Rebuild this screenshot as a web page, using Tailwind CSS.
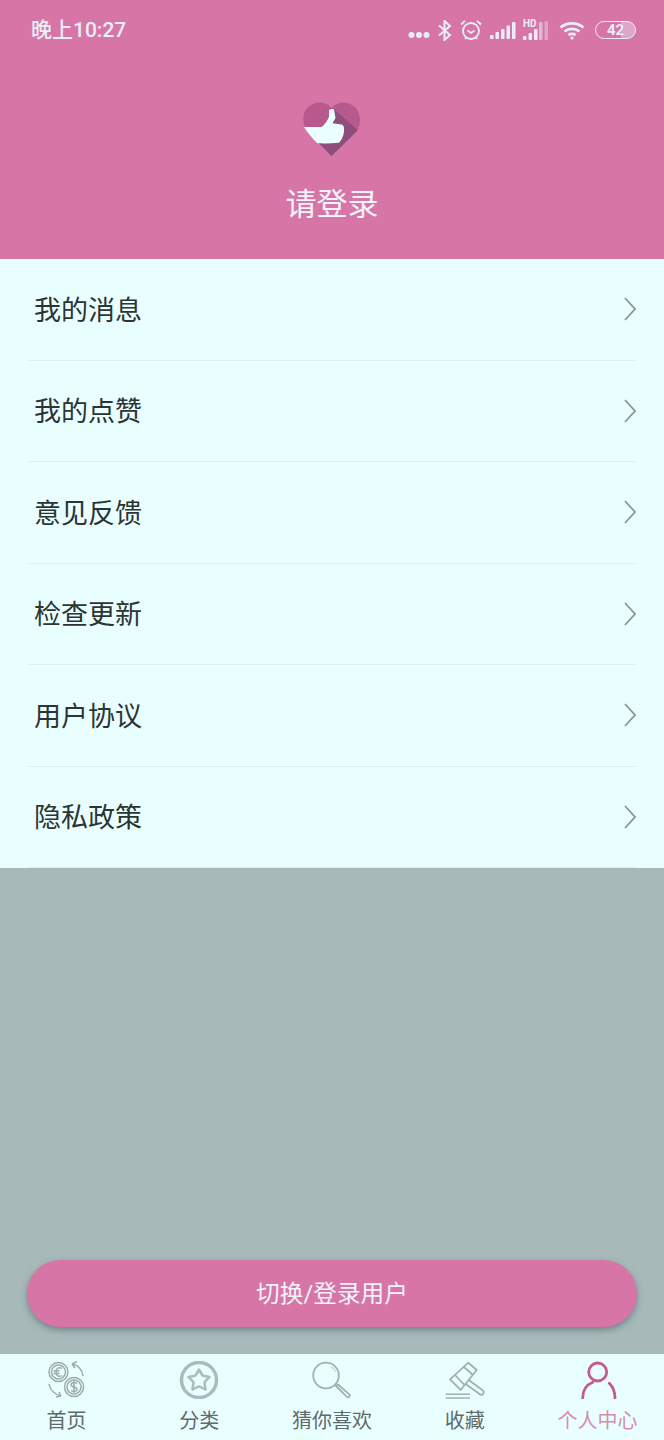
<!doctype html>
<html lang="zh">
<head>
<meta charset="utf-8">
<script src="https://cdn.jsdelivr.net/npm/@tailwindcss/browser@4"></script>
</head>
<body class="m-0 bg-[#a7b9b9] font-['Roboto','Noto_Sans_CJK_SC',sans-serif]">
<div class="w-[664px] h-[1440px] flex flex-col overflow-hidden">
  <header class="h-[259px] shrink-0 bg-[#d776a6] flex flex-col">
    <div class="h-[60px] flex items-center justify-between pl-[31px] pr-[28px] text-[#e8eef8]">
      <span class="text-[21px] font-medium leading-none">晚上10:27</span>
      <div class="flex items-center gap-[8px]">
        <svg width="22" height="8" viewBox="0 0 22 8" fill="#e8eef8" class="mt-[9px]"><circle cx="3.5" cy="4" r="3"/><circle cx="11" cy="4" r="3"/><circle cx="18.500" cy="4" r="3"/></svg>
        <svg width="14" height="21" viewBox="0 0 14 21" fill="none" stroke="#e8eef8" stroke-width="2"><path d="M1 5.500 12 15 6.500 20V1L12 6 1 15.500"/></svg>
        <svg width="22" height="22" viewBox="0 0 22 22" fill="none" stroke="#e8eef8" stroke-width="1.800"><circle cx="11" cy="12" r="8"/><path d="M7.500 11.500 11 14l3.500-2.500M1 5.500 5 1.800M21 5.500 17 1.800M5 20l1.500-2M17 20l-1.500-2"/></svg>
        <svg width="26" height="19" viewBox="0 0 26 19" fill="#e8eef8"><rect x="0" y="14" width="3.500" height="4" rx="1"/><rect x="5.500" y="11" width="3.500" height="7" rx="1"/><rect x="11" y="8" width="3.500" height="10" rx="1"/><rect x="16.500" y="4.500" width="3.500" height="13.500" rx="1"/><rect x="22" y="1" width="3.500" height="17" rx="1"/></svg>
        <div class="relative w-[26px] h-[22px] -ml-[1px]">
          <span class="absolute left-0 top-0 text-[10px] font-bold leading-[10px]">HD</span>
          <svg class="absolute left-0 top-[2px]" width="26" height="20" viewBox="0 0 26 20" fill="#e8eef8"><rect x="0" y="15" width="3.500" height="4" rx="1"/><rect x="5.500" y="12" width="3.500" height="7" rx="1"/><rect x="11" y="8" width="3.500" height="11" rx="1"/><rect x="16" y="1" width="3.500" height="18" rx="1" opacity=".55"/><rect x="21.500" y="0" width="3.500" height="19" rx="1" opacity=".4"/></svg>
        </div>
        <svg width="26" height="19" viewBox="0 0 26 19" fill="none" stroke="#e8eef8" stroke-width="2.800" class="ml-[2px]"><path d="M1.500 6.500C8 1 18 1 24.500 6.500M5.500 10.500C10 7 16 7 20.500 10.500M9.500 14C11.500 12.700 14.500 12.700 16.500 14"/><circle cx="13" cy="17" r="1.600" fill="#e8eef8" stroke="none"/></svg>
        <div class="ml-[2px] w-[41px] h-[18px] rounded-full border-[1.5px] border-[#e8eef8] flex items-center justify-center text-[15px] font-bold leading-none bg-gradient-to-r from-transparent from-[65%] to-[#e8eef8]/40 to-[65%]">42</div>
      </div>
    </div>
    <div class="flex flex-col items-center mt-[42px]">
      <svg width="58" height="55" viewBox="0 0 58 55">
        <defs><clipPath id="heart"><path d="M28.500 54 4 29C-2 21-1 8 8 3c7-4 15-3 20.500 3C34 0 42-1 49 3c9 5 10 18 5 26Z"/></clipPath></defs>
        <path d="M28.500 54 4 29C-2 21-1 8 8 3c7-4 15-3 20.500 3C34 0 42-1 49 3c9 5 10 18 5 26Z" fill="#b7598d"/>
        <path d="M31 7 60 33 28.500 60 14 40Z" fill="#8f4d7c" clip-path="url(#heart)"/>
        <path d="M1 25H18.700C22 22 25 18 26 14.700V8.500C27 7 30 6.700 31 7.500L32.500 16 29.500 21.300 38.500 22.500C40.500 23 41.500 25 41 29.700 40.500 34 38.500 38 36 40.700 29 41.500 21 41.500 14.300 41.300 9 36 4 30 1 25Z" fill="#eaffff"/>
      </svg>
      <div class="mt-[28px] text-[31px] leading-[40px] text-[#f1f2fa]">请登录</div>
    </div>
  </header>

  <main class="shrink-0 bg-[#e9ffff] h-[609px] flex flex-col pl-[28px] pr-[28px]">
    <a class="h-[101.5px] flex items-center justify-between border-b border-[#dfeeee] pl-[6px] text-[27px] text-[#2d3434]"><span class="pt-[3px]">我的消息</span><svg width="12" height="24" viewBox="0 0 12 24" fill="none" stroke="#8a9494" stroke-width="1.800"><path d="M1 1 11 12 1 23"/></svg></a>
    <a class="h-[101.5px] flex items-center justify-between border-b border-[#dfeeee] pl-[6px] text-[27px] text-[#2d3434]"><span class="pt-[3px]">我的点赞</span><svg width="12" height="24" viewBox="0 0 12 24" fill="none" stroke="#8a9494" stroke-width="1.800"><path d="M1 1 11 12 1 23"/></svg></a>
    <a class="h-[101.5px] flex items-center justify-between border-b border-[#dfeeee] pl-[6px] text-[27px] text-[#2d3434]"><span class="pt-[3px]">意见反馈</span><svg width="12" height="24" viewBox="0 0 12 24" fill="none" stroke="#8a9494" stroke-width="1.800"><path d="M1 1 11 12 1 23"/></svg></a>
    <a class="h-[101.5px] flex items-center justify-between border-b border-[#dfeeee] pl-[6px] text-[27px] text-[#2d3434]"><span class="pt-[3px]">检查更新</span><svg width="12" height="24" viewBox="0 0 12 24" fill="none" stroke="#8a9494" stroke-width="1.800"><path d="M1 1 11 12 1 23"/></svg></a>
    <a class="h-[101.5px] flex items-center justify-between border-b border-[#dfeeee] pl-[6px] text-[27px] text-[#2d3434]"><span class="pt-[3px]">用户协议</span><svg width="12" height="24" viewBox="0 0 12 24" fill="none" stroke="#8a9494" stroke-width="1.800"><path d="M1 1 11 12 1 23"/></svg></a>
    <a class="h-[101.5px] flex items-center justify-between border-b border-[#dfeeee] pl-[6px] text-[27px] text-[#2d3434]"><span class="pt-[3px]">隐私政策</span><svg width="12" height="24" viewBox="0 0 12 24" fill="none" stroke="#8a9494" stroke-width="1.800"><path d="M1 1 11 12 1 23"/></svg></a>
  </main>

  <section class="flex-1 bg-[#a7b9b9] flex flex-col justify-end px-[27px] pb-[27px]">
    <button class="w-[610px] h-[67px] rounded-full bg-[#d776a6] text-[#f1f2fa] text-[23.700px] pt-[2px] shadow-[0_3px_6px_rgba(70,90,100,0.55)]">切换/登录用户</button>
  </section>

  <nav class="h-[86px] shrink-0 bg-[#e9ffff] grid grid-cols-5 text-[20px] text-[#5f6a6a]">
    <div class="flex flex-col items-center pt-[7px]">
      <svg width="40" height="38" viewBox="0 0 40 38" fill="none" stroke="#9eabab" stroke-width="1.500">
        <circle cx="12.500" cy="11" r="9.500"/><circle cx="12.500" cy="11" r="7"/>
        <circle cx="28" cy="26" r="9.500"/><circle cx="28" cy="26" r="7"/>
        <path d="M16 7.500c-3-2-6 0-6 3.500s3 5.500 6 3.500M7.500 10h6M7.500 12.500h6"/>
        <path d="M31 22.500c-2-1.500-6-1-6 1 0 3.500 6 1.500 6 5 0 2-4 2.500-6 1M28 20v12"/>
        <path d="M26 3c6 1 10 5 11 12M26 3l5-2.500M26 3l3 4"/>
        <path d="M3 23c1 6 5 10 12 12M15 35l-2-4M15 35l-5 1"/>
      </svg>
      <span class="mt-[9px] leading-[27px]">首页</span>
    </div>
    <div class="flex flex-col items-center pt-[7px]">
      <svg width="40" height="38" viewBox="0 0 40 38" fill="none" stroke="#a9bcbc"><circle cx="20" cy="19" r="17.500" stroke-width="3.500"/><path d="M20 8.500 23.500 14.500C25 15.500 29 15 30.500 16 28 18.500 26 20 25.500 21.500 25.500 24 27 27.500 26.500 28.500 24 27.500 21.500 25.500 20 25.500 18.500 25.500 16 27.500 13.500 28.500 13 27.500 14.500 24 14.500 21.500 14 20 12 18.500 9.500 16 11 15 15 15.500 16.500 14.500Z" stroke-width="2.500" stroke-linejoin="round"/></svg>
      <span class="mt-[9px] leading-[27px]">分类</span>
    </div>
    <div class="flex flex-col items-center pt-[7px]">
      <svg width="40" height="38" viewBox="0 0 40 38" fill="none" stroke="#a2b0b0"><circle cx="14" cy="14.500" r="12.800" stroke-width="1.800"/><path d="M19 6c2.500 1 4 3 4.500 5" stroke="#cfdcdc" stroke-width="1.500"/><path d="M24 25 26 23.500 37.500 33.500a1.800 1.800 0 0 1-2.600 2.400Z" stroke-width="1.800"/></svg>
      <span class="mt-[9px] leading-[27px]">猜你喜欢</span>
    </div>
    <div class="flex flex-col items-center pt-[7px]">
      <svg width="40" height="38" viewBox="0 0 40 38" fill="none" stroke="#a2b0b0" stroke-width="1.800" stroke-linejoin="round"><path d="M23.300 1.700 31.700 9 15.700 29 5 18.300Z"/><path d="M18.500 5.500 28 14M10 14 19.500 24"/><path d="M23 18.500 38 29.500a2.300 2.300 0 0 1-3.500 3.500L20 22.500"/><path d="M.7 33.300H25M.7 37H25" stroke-width="1.500"/></svg>
      <span class="mt-[9px] leading-[27px]">收藏</span>
    </div>
    <div class="flex flex-col items-center pt-[7px] text-[#d48db4]">
      <svg width="40" height="38" viewBox="0 0 40 38" fill="none" stroke="#c75a8d" stroke-width="2.800" stroke-linecap="round"><circle cx="19.700" cy="11" r="9"/><path d="M4.700 37C4.700 30 8 24 14.700 21.300M31.300 22.300C35 26 37 31 37 37"/></svg>
      <span class="mt-[9px] leading-[27px]">个人中心</span>
    </div>
  </nav>
</div>
</body>
</html>
